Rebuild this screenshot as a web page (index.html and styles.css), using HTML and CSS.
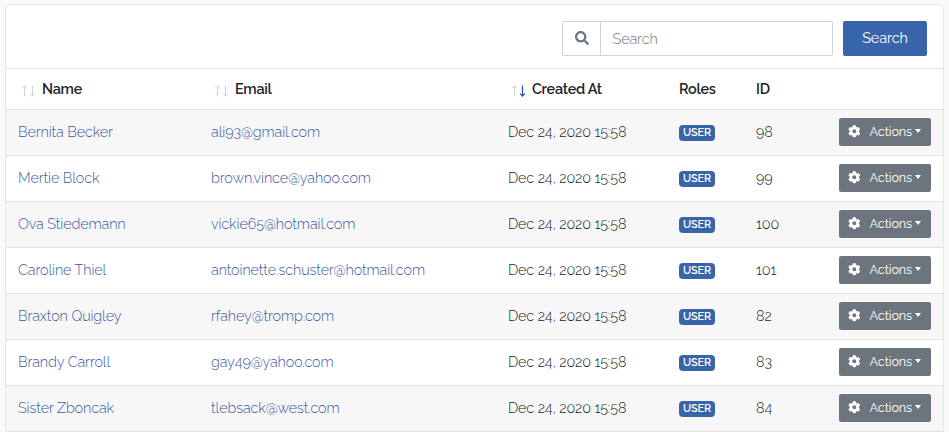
FILE: index.html
```
<!DOCTYPE html>
<html lang="en">
<head>
<meta charset="utf-8">
<title>Users</title>
<link rel="stylesheet" href="styles.css">
</head>
<body>
<svg class="sprite" aria-hidden="true">
  <symbol id="search" viewBox="0 0 512 512"><path d="M505 442.7L405.300 343c-4.500-4.500-10.600-7-17-7H372c27.600-35.300 44-79.700 44-128C416 93.100 322.900 0 208 0S0 93.100 0 208s93.100 208 208 208c48.300 0 92.700-16.400 128-44v16.300c0 6.400 2.500 12.500 7 17l99.700 99.700c9.400 9.400 24.600 9.400 33.900 0l28.300-28.300c9.400-9.400 9.400-24.600.1-34zM208 336c-70.700 0-128-57.200-128-128 0-70.700 57.200-128 128-128 70.700 0 128 57.200 128 128 0 70.700-57.200 128-128 128z"/></symbol>
  <symbol id="cog" viewBox="0 0 512 512"><path d="M487.400 315.700l-42.600-24.600c4.300-23.200 4.300-47 0-70.200l42.600-24.600c4.900-2.800 7.100-8.600 5.500-14-11.100-35.600-30-67.800-54.700-94.600-3.800-4.100-10-5.100-14.800-2.300L380.800 110c-17.900-15.400-38.500-27.300-60.800-35.100V25.800c0-5.600-3.900-10.500-9.400-11.700-36.700-8.200-74.300-7.800-109.200 0-5.500 1.200-9.400 6.100-9.400 11.700V75c-22.200 7.900-42.800 19.800-60.800 35.100L88.700 85.500c-4.900-2.800-11-1.900-14.800 2.300-24.700 26.700-43.600 58.900-54.700 94.600-1.700 5.400.6 11.200 5.500 14L67.300 221c-4.300 23.200-4.300 47 0 70.200l-42.600 24.600c-4.900 2.800-7.100 8.600-5.500 14 11.100 35.600 30 67.800 54.700 94.600 3.800 4.100 10 5.100 14.800 2.300l42.600-24.600c17.900 15.400 38.500 27.300 60.800 35.100v49.200c0 5.600 3.900 10.500 9.400 11.700 36.700 8.200 74.300 7.800 109.200 0 5.500-1.200 9.400-6.100 9.400-11.700v-49.200c22.200-7.900 42.800-19.800 60.800-35.100l42.600 24.600c4.900 2.800 11 1.900 14.800-2.300 24.700-26.700 43.600-58.900 54.700-94.600 1.500-5.500-.7-11.300-5.600-14.100zM256 336c-44.100 0-80-35.900-80-80s35.900-80 80-80 80 35.900 80 80-35.900 80-80 80z"/></symbol>
  <symbol id="up" viewBox="0 0 7 12"><path d="M3.500 11.500V1.500M1 3.400L3.500 1l2.500 2.400"/></symbol>
  <symbol id="down" viewBox="0 0 7 12"><path d="M3.500.5v10M1 8.600L3.500 11l2.500-2.400"/></symbol>
</svg>
<main class="card">
  <form class="toolbar">
    <div class="field">
      <span class="addon"><svg><use href="#search"/></svg></span>
      <input type="text" placeholder="Search" aria-label="Search">
    </div>
    <button class="submit" type="button">Search</button>
  </form>
  <table>
    <colgroup><col class="c-name"><col class="c-email"><col class="c-date"><col class="c-role"><col class="c-id"><col></colgroup>
    <thead><tr>
      <th><span class="sort"><svg><use href="#up"/></svg><svg><use href="#down"/></svg></span>Name</th>
      <th><span class="sort"><svg><use href="#up"/></svg><svg><use href="#down"/></svg></span>Email</th>
      <th><span class="sort"><svg><use href="#up"/></svg><svg class="on"><use href="#down"/></svg></span>Created At</th>
      <th>Roles</th><th>ID</th><th></th>
    </tr></thead>
    <tbody>
      <tr><td><a>Bernita Becker</a></td><td><a>ali93@gmail.com</a></td><td class="date">Dec 24, 2020 15:58</td><td><span class="badge">USER</span></td><td class="id">98</td><td class="act"><button><svg><use href="#cog"/></svg>Actions</button></td></tr>
      <tr><td><a>Mertie Block</a></td><td><a>brown.vince@yahoo.com</a></td><td class="date">Dec 24, 2020 15:58</td><td><span class="badge">USER</span></td><td class="id">99</td><td class="act"><button><svg><use href="#cog"/></svg>Actions</button></td></tr>
      <tr><td><a>Ova Stiedemann</a></td><td><a>vickie65@hotmail.com</a></td><td class="date">Dec 24, 2020 15:58</td><td><span class="badge">USER</span></td><td class="id">100</td><td class="act"><button><svg><use href="#cog"/></svg>Actions</button></td></tr>
      <tr><td><a>Caroline Thiel</a></td><td><a>antoinette.schuster@hotmail.com</a></td><td class="date">Dec 24, 2020 15:58</td><td><span class="badge">USER</span></td><td class="id">101</td><td class="act"><button><svg><use href="#cog"/></svg>Actions</button></td></tr>
      <tr><td><a>Braxton Quigley</a></td><td><a>rfahey@tromp.com</a></td><td class="date">Dec 24, 2020 15:58</td><td><span class="badge">USER</span></td><td class="id">82</td><td class="act"><button><svg><use href="#cog"/></svg>Actions</button></td></tr>
      <tr><td><a>Brandy Carroll</a></td><td><a>gay49@yahoo.com</a></td><td class="date">Dec 24, 2020 15:58</td><td><span class="badge">USER</span></td><td class="id">83</td><td class="act"><button><svg><use href="#cog"/></svg>Actions</button></td></tr>
      <tr class="last"><td><a>Sister Zboncak</a></td><td><a>tlebsack@west.com</a></td><td class="date">Dec 24, 2020 15:58</td><td><span class="badge">USER</span></td><td class="id">84</td><td class="act"><button><svg><use href="#cog"/></svg>Actions</button></td></tr>
    </tbody>
  </table>
</main>
</body>
</html>
```
FILE: styles.css
```
* { box-sizing: border-box; }
body {
  margin: 0;
  padding: 4px 5px 0;
  height: 432px;
  overflow: hidden;
  background: #f8fafc;
  color: #212529;
  font-family: Raleway, Lato, "Open Sans", sans-serif;
  font-size: 14.4px;
  font-weight: 300;
  line-height: 23px;
}
.sprite { display: none; }
button, input { font: inherit; }
.card {
  width: 939px;
  height: 440px;
  background: #fff;
  border: 1px solid #e4e7ea;
  border-radius: 4px;
}
.toolbar {
  display: flex;
  justify-content: flex-end;
  gap: 10px;
  height: 63px;
  padding: 16px 16px 0;
}
.field {
  display: flex;
  width: 271px;
  height: 35px;
  border: 1px solid #ced4da;
  border-radius: 2px;
}
.addon {
  display: flex;
  align-items: center;
  justify-content: center;
  width: 38px;
  padding-bottom: 1px;
  border-right: 1px solid #ced4da;
}
.addon svg { width: 14px; height: 14px; fill: #6c757d; }
.field input {
  flex: 1;
  min-width: 0;
  padding: 0 11.5px;
  border: 0;
  background: none;
  letter-spacing: -.08px;
}
.field input::placeholder { color: #6c757d; opacity: 1; }
.submit {
  width: 84px;
  height: 35px;
  padding: 0 0 2px;
  border: 0;
  border-radius: 2px;
  background: #3864a9;
  color: #fff;
  font-weight: 400;
  letter-spacing: -.1px;
}
table {
  width: 937px;
  table-layout: fixed;
  border-collapse: separate;
  border-spacing: 0;
}
.c-name { width: 193px; }
.c-email { width: 297px; }
.c-date { width: 171px; }
.c-role { width: 77px; }
.c-id { width: 83px; }
th, td { border-top: 1px solid #dee2e6; text-align: left; white-space: nowrap; }
th { height: 41px; padding: 0 12px 1px; font-weight: 600; letter-spacing: -.25px; }
td { height: 46px; padding: 0 12px 2px; letter-spacing: -.1px; }
.date { letter-spacing: -.14px; }
.last td { height: 47px; border-bottom: 1px solid #dee2e6; }
tbody tr:nth-child(odd) { background: #f7f7f7; }
a { color: #3a5a9f; }
.sort { display: inline-flex; gap: 1px; margin: 0 6.5px 0 2.500px; vertical-align: -3px; }
.sort svg { width: 7px; height: 12px; fill: none; stroke: #cfd1d3; }
.sort .on { stroke: #3058a0; stroke-width: 1.3; }
.badge {
  display: block;
  width: 36px;
  height: 16px;
  margin-top: 2px;
  border-radius: 4px;
  background: #3864a9;
  color: #fff;
  font-size: 10.8px;
  font-weight: 600;
  line-height: 16px;
  text-align: center;
  letter-spacing: -.1px;
}
td.act { padding: 0 12px 2px 0; text-align: right; }
.act button {
  display: inline-flex;
  align-items: center;
  width: 92px;
  height: 28px;
  margin: 0;
  padding: 0 9px;
  border: 0;
  border-radius: 2px;
  background: #6c757d;
  color: #fff;
  font-size: 12.6px;
  font-weight: 400;
  line-height: 19px;
  letter-spacing: -.1px;
  vertical-align: middle;
}
.act svg { flex: none; width: 12.6px; height: 12.6px; margin-right: 9px; fill: #fff; }
.act button::after {
  content: "";
  flex: none;
  margin: -2px 0 0 3px;
  border: 3.5px solid transparent;
  border-top: 4px solid #fff;
  border-bottom: 0;
}
```
